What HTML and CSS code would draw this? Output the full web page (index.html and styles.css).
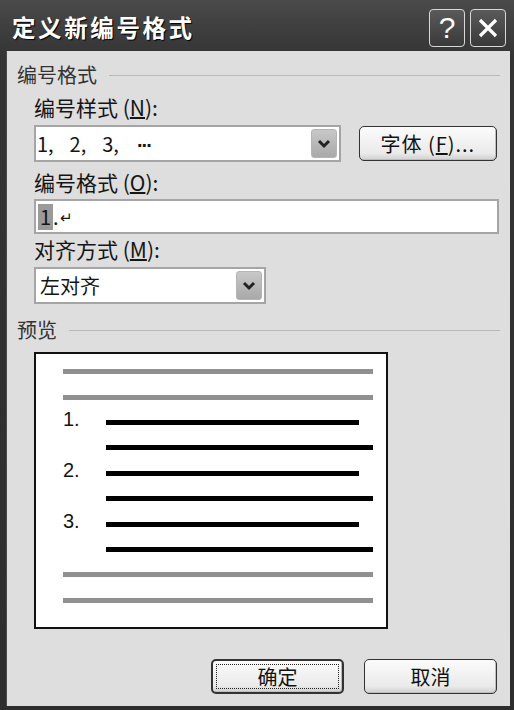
FILE: index.html
```html
<!DOCTYPE html>
<html lang="zh-CN">
<head>
    <meta charset="UTF-8">
    <title>定义新编号格式</title>
    <link rel="stylesheet" href="styles.css">
</head>
<body>
<div class="window">
    <div class="titlebar">
        <span class="title">定义新编号格式</span>
        <div class="title-buttons">
            <span class="tbtn">?</span>
            <span class="tbtn">
                <svg width="22" height="22" viewBox="0 0 22 22"><path d="M3 3 L19 19 M19 3 L3 19" stroke="#fff" stroke-width="3.2"/></svg>
            </span>
        </div>
    </div>

    <div class="client">
        <div class="group-title"><span>编号格式</span><div class="rule"></div></div>

        <div class="field">
            <div class="label">编号样式 (<u>N</u>):</div>
            <div class="row">
                <div class="combo combo-wide">
                    <span class="combo-text">1,&nbsp; 2,&nbsp; 3,&nbsp; <b class="dots">···</b></span>
                    <span class="drop"><svg width="14" height="10" viewBox="0 0 14 10"><path d="M2 2 L7 7 L12 2" fill="none" stroke="#222" stroke-width="3"/></svg></span>
                </div>
                <button class="btn font-btn">字体 (<u>F</u>)...</button>
            </div>

            <div class="label">编号格式 (<u>O</u>):</div>
            <div class="input"><span class="sel">1</span>.<span class="ret">↵</span></div>

            <div class="label label-tight">对齐方式 (<u>M</u>):</div>
            <div class="combo combo-short">
                <span class="combo-text">左对齐</span>
                <span class="drop"><svg width="14" height="10" viewBox="0 0 14 10"><path d="M2 2 L7 7 L12 2" fill="none" stroke="#222" stroke-width="3"/></svg></span>
            </div>
        </div>

        <div class="group-title preview-title"><span>预览</span><div class="rule"></div></div>

        <div class="preview">
            <div class="line"><div class="bar gray"></div></div>
            <div class="line"><div class="bar gray"></div></div>
            <div class="line"><span class="num">1.</span><div class="bar short"></div></div>
            <div class="line indent"><div class="bar"></div></div>
            <div class="line"><span class="num">2.</span><div class="bar short"></div></div>
            <div class="line indent"><div class="bar"></div></div>
            <div class="line"><span class="num">3.</span><div class="bar short"></div></div>
            <div class="line indent"><div class="bar"></div></div>
            <div class="line"><div class="bar gray"></div></div>
            <div class="line"><div class="bar gray"></div></div>
        </div>

        <div class="actions">
            <button class="btn action default"><span class="focus">确定</span></button>
            <button class="btn action">取消</button>
        </div>
    </div>
</div>
</body>
</html>
```

FILE: styles.css
```css
body {
    margin: 0;
    background-color: #2e2e2e;
    font-family: "Noto Sans CJK SC", "Liberation Sans", sans-serif;
    color: #151515;
}

.window {
    width: 514px;
    height: 710px;
    display: flex;
    flex-direction: column;
    background: linear-gradient(#4a4a4a, #343434 8%, #2d2d2d);
}

.titlebar {
    height: 51px;
    display: flex;
    align-items: center;
    justify-content: space-between;
    padding: 0 8px 0 12px;
    box-sizing: border-box;
}

.title {
    color: #fff;
    font-size: 23.5px;
    font-weight: bold;
    letter-spacing: 2.6px;
    text-shadow: 1px 1px 1px #000;
    margin-top: 2px;
}

.title-buttons {
    display: flex;
    gap: 5px;
    margin-top: 4px;
}

.tbtn {
    width: 34px;
    height: 36px;
    border: 1.5px solid #d8d8d8;
    border-radius: 4px;
    background: linear-gradient(#5a5a5a, #3a3a3a);
    color: #fff;
    font-family: "Liberation Sans", sans-serif;
    font-size: 30px;
    line-height: 36px;
    text-align: center;
    display: flex;
    align-items: center;
    justify-content: center;
}

.client {
    flex: 1;
    background-color: #dedede;
    margin: 0 4px 4px 6px;
    padding: 12px 13px 0 10px;
    display: flex;
    flex-direction: column;
    border-left: 1px solid #4a4a4a;
}

.group-title {
    display: flex;
    align-items: center;
    font-size: 20px;
    line-height: 24px;
    color: #333;
}

.rule {
    flex: 1;
    height: 1px;
    background-color: #b8b8b8;
    margin-left: 12px;
    margin-right: -3px;
}

.field {
    margin-left: 17px;
    display: flex;
    flex-direction: column;
}

.label {
    font-size: 21px;
    line-height: 24px;
    margin-top: 8px;
}

.label-tight {
    margin-top: 3px;
}

u {
    text-decoration: underline;
    text-underline-offset: 1px;
}

.row {
    display: flex;
    align-items: center;
    gap: 18px;
    margin-top: 6px;
}

.combo {
    height: 37px;
    box-sizing: border-box;
    border: 2px solid #a5a5a5;
    background-color: #fff;
    display: flex;
    align-items: center;
    justify-content: space-between;
    padding: 0 2px 0 4px;
}

.combo-wide {
    width: 308px;
    padding-left: 1px;
}

.combo-short {
    width: 232px;
    margin-top: 6px;
}

.combo-text {
    font-size: 20px;
    white-space: pre;
}

.combo-wide .combo-text {
    word-spacing: 3.5px;
}

.dots {
    font-family: "Liberation Sans", sans-serif;
    letter-spacing: -2px;
    margin-left: 2px;
}

.drop {
    width: 26px;
    height: 29px;
    border-radius: 3px;
    background: linear-gradient(#c8c8c8, #a9a9a9);
    border: 1px solid #b5b5b5;
    box-sizing: border-box;
    display: flex;
    align-items: center;
    justify-content: center;
}

.btn {
    font-family: "Noto Sans CJK SC", "Liberation Sans", sans-serif;
    font-size: 20px;
    color: #111;
    border: 1.5px solid #333;
    border-radius: 5px;
    background: linear-gradient(#fbfbfb, #eaeaea 80%, #cfcfcf);
    box-shadow: inset -1px -1px 0 #bdbdbd;
    padding: 0;
}

.font-btn {
    width: 139px;
    height: 35px;
    letter-spacing: 1px;
}

.input {
    margin-top: 5px;
    height: 35px;
    box-sizing: border-box;
    border: 2px solid #a5a5a5;
    background-color: #fff;
    font-size: 20px;
    display: flex;
    align-items: center;
    padding-left: 2px;
    margin-right: -2px;
}

.sel {
    background-color: #9a9a9a;
    padding: 0 2px;
    line-height: 26px;
}

.ret {
    font-size: 15px;
    margin-left: 1px;
}

.preview-title {
    margin-top: 14px;
}

.preview {
    margin-top: 10px;
    margin-left: 17px;
    width: 354px;
    height: 277px;
    box-sizing: border-box;
    border: 2px solid #111;
    background-color: #fff;
    padding: 5px 13px 0 27px;
}

.line {
    height: 25.4px;
    display: flex;
    align-items: center;
}

.line.indent {
    padding-left: 43px;
}

.num {
    width: 43px;
    font-family: "Liberation Sans", sans-serif;
    font-size: 20px;
    line-height: 20px;
    margin-top: -7px;
}

.bar {
    flex: 1;
    height: 5px;
    background-color: #000;
}

.bar.gray {
    background-color: #909090;
}

.bar.short {
    flex: none;
    width: 253px;
}

.actions {
    display: flex;
    justify-content: flex-end;
    gap: 20px;
    margin-top: 30px;
}

.action {
    width: 133px;
    height: 35px;
}

.default {
    border-width: 2px;
    padding: 3px;
}

.focus {
    display: flex;
    align-items: center;
    justify-content: center;
    height: 100%;
    border: 1px dotted #222;
    box-sizing: border-box;
}
```
